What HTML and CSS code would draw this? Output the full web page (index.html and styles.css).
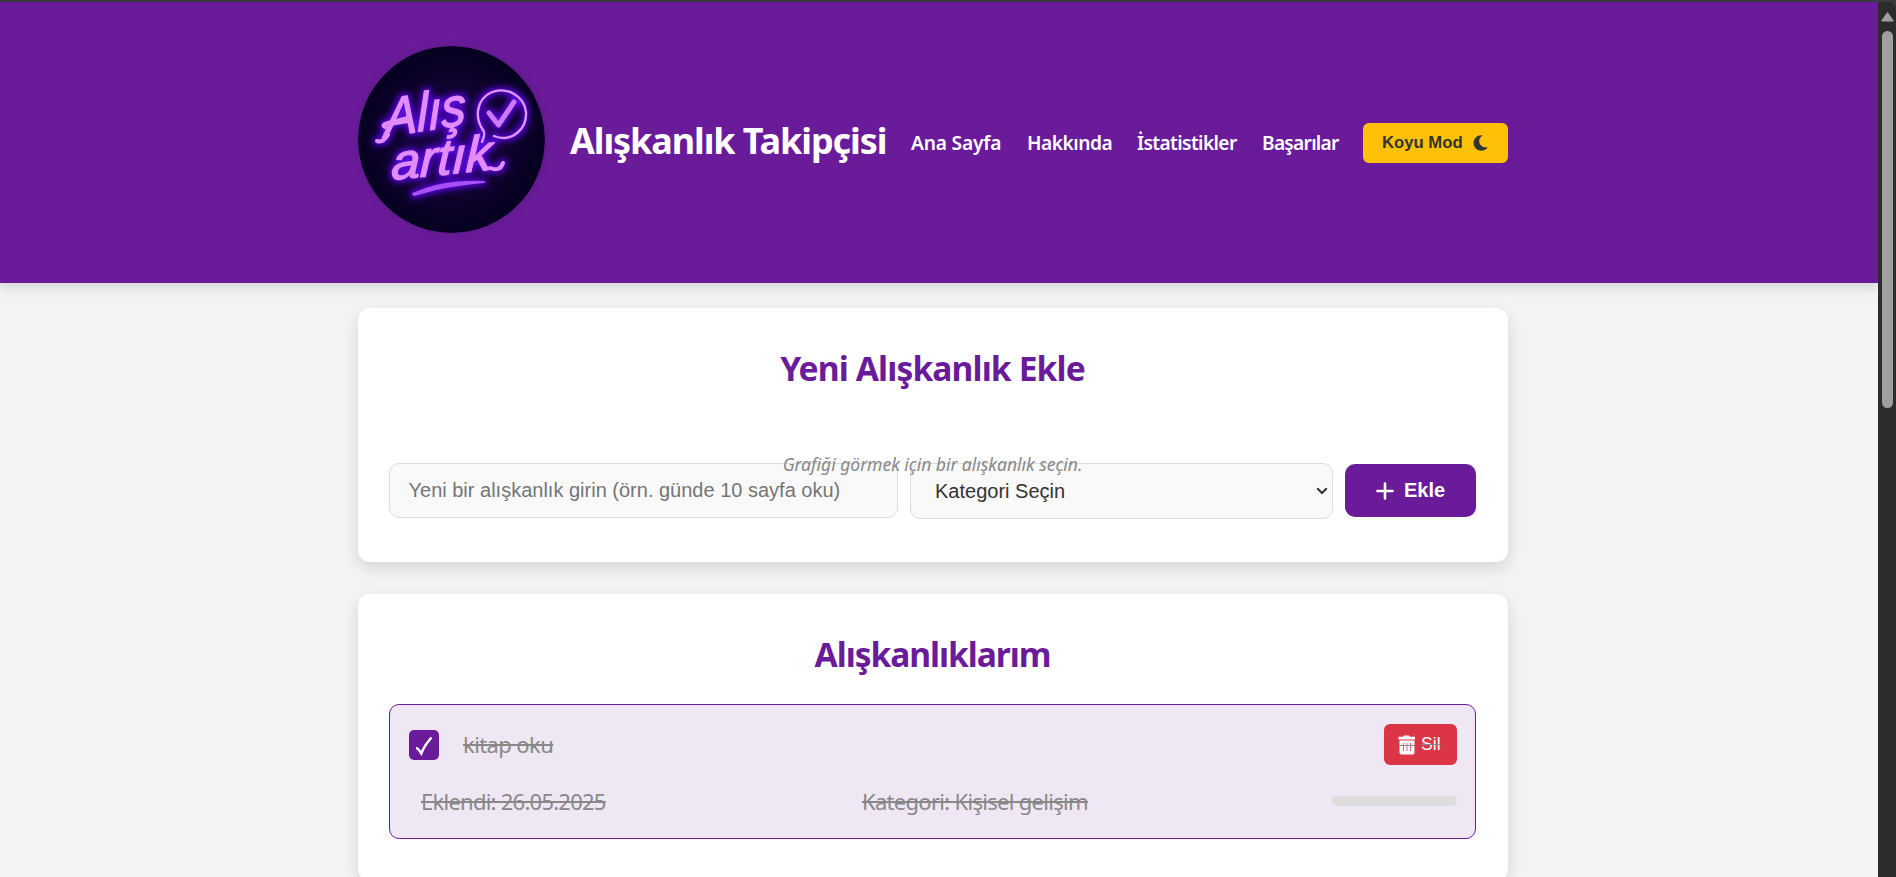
FILE: index.html
```html
<!DOCTYPE html>
<html lang="tr">
<head>
<meta charset="utf-8">
<title>Alışkanlık Takipçisi</title>
<link rel="stylesheet" href="styles.css">
</head>
<body>
<div class="window">
  <div class="page">
    <header class="header">
      <svg class="logo" viewBox="0 0 187 187" role="img" aria-label="Alış artık">
        <defs>
          <radialGradient id="disc" cx="50%" cy="50%" r="50%">
            <stop offset="0" stop-color="#1c0450"/>
            <stop offset=".6" stop-color="#0f022e"/>
            <stop offset="1" stop-color="#060020"/>
          </radialGradient>
          <filter id="glow" x="-20%" y="-20%" width="140%" height="140%">
            <feMorphology in="SourceAlpha" operator="dilate" radius="1.500" result="wide"/>
            <feGaussianBlur in="wide" stdDeviation="3.200" result="soft"/>
            <feFlood flood-color="#5a08e0"/>
            <feComposite in2="soft" operator="in"/>
          </filter>
          <g id="sign">
            <g transform="translate(27 91) rotate(-9) skewX(-8)"><text class="script" x="0" y="0" textLength="82" lengthAdjust="spacingAndGlyphs">Alış</text></g>
            <g transform="translate(33 134) rotate(-6) skewX(-8)"><text class="script script-low" x="0" y="0" textLength="101" lengthAdjust="spacingAndGlyphs">artık</text></g>
            <path class="flourish" d="M27 81 Q23 79 30 77 L50 72 M30 89 Q25 97 19 95"/>
            <path class="flourish" d="M132 122 Q142 126 145 117"/>
            <path class="ring" d="M125 84 C116 71 119 53 133 46.500 C149 40 166 50 168 66 C169 83 154 97 136 90"/>
            <path class="ring" d="M125 84 Q128 87 124 96"/>
            <path class="tick" d="M131 67 L140.500 79 L156 56"/>
            <path class="swoosh" d="M55 148 Q86 134 126 136 Q88 139 56 149 Z"/>
          </g>
        </defs>
        <circle cx="93.500" cy="93.500" r="93.500" fill="url(#disc)"/>
        <g filter="url(#glow)"><use href="#sign"/></g>
        <use href="#sign"/>
      </svg>
      <h1 class="title">Alışkanlık Takipçisi</h1>
      <nav class="nav">
        <a class="link link-home">Ana Sayfa</a>
        <a class="link link-about">Hakkında</a>
        <a class="link link-stats">İstatistikler</a>
        <a class="link link-awards">Başarılar</a>
      </nav>
      <button class="theme"><span>Koyu Mod</span>
        <svg width="15" height="16" viewBox="0 0 15 16"><path fill="#333" d="M8.500 .3C4 .3 .5 3.700 .5 8s3.500 7.700 7.800 7.700c2.400 0 4.500-1 5.900-2.700.3-.4 0-.8-.5-.7C9.700 13 6.200 10 6.200 6.100c0-2.200 1.200-4.200 3-5.300.4-.2.3-.5-.7-.5z"/></svg>
      </button>
    </header>

    <main class="main">
      <section class="card card-add">
        <h2 class="heading heading-add">Yeni Alışkanlık Ekle</h2>
        <p class="hint">Grafiği görmek için bir alışkanlık seçin.</p>
        <div class="form">
          <div class="field field-name"><span class="placeholder">Yeni bir alışkanlık girin (örn. günde 10 sayfa oku)</span></div>
          <div class="field field-category"><span class="choice">Kategori Seçin</span>
            <svg width="12" height="8" viewBox="0 0 12 8"><path d="M1.200 1.200 6 6l4.800-4.800" fill="none" stroke="#333" stroke-width="2"/></svg>
          </div>
          <button class="add">
            <svg width="18" height="18" viewBox="0 0 18 18"><path d="M9 1.500v15M1.500 9h15" stroke="#fff" stroke-width="2.600" stroke-linecap="round"/></svg>
            <span>Ekle</span>
          </button>
        </div>
      </section>

      <section class="card card-list">
        <h2 class="heading heading-list">Alışkanlıklarım</h2>
        <article class="habit">
          <div class="habit-top">
            <span class="check"><svg width="30" height="30" viewBox="0 0 30 30"><path d="M7 18 Q9 18 12.300 23.500 Q15 16 22.500 7.500" fill="none" stroke="#fff" stroke-width="2.400"/></svg></span>
            <span class="name struck">kitap oku</span>
            <button class="delete">
              <svg width="18" height="20" viewBox="0 0 18 20"><path fill="#fff" d="M6 .5h5l1 1.300h5v2.600H.5V1.800H5zM1.500 5.500h15V17.500a2 2 0 0 1-2 2h-11a2 2 0 0 1-2-2z"/><path d="M5.500 8v8M9 8v8M12.500 8v8" stroke="#dc6570"/><path d="M1 10.500h16" stroke="#888"/></svg>
              <span class="delete-text">Sil</span>
            </button>
          </div>
          <div class="habit-bottom">
            <span class="added struck">Eklendi: 26.05.2025</span>
            <span class="category struck">Kategori: Kişisel gelişim</span>
            <span class="progress"></span>
          </div>
        </article>
      </section>
    </main>
  </div>
  <div class="scrollbar">
    <svg width="13" height="10" viewBox="0 0 13 10"><path d="M6.500 1.200 11.800 8.800H1.200z" fill="#9f9f9f" stroke="#9f9f9f" stroke-linejoin="round" stroke-width="1.500"/></svg>
    <div class="thumb"></div>
  </div>
</div>
</body>
</html>
```

FILE: styles.css
```css
* { box-sizing: border-box; }
body { margin: 0; background: #3a3a3a; font-family: "Noto Sans", "Open Sans", sans-serif; color: #333; }
h1, h2, p { margin: 0; }
button { border: 0; padding: 0; font-family: "Liberation Sans", Arial, sans-serif; }
span, a, h1, h2, p { white-space: nowrap; }

.window { display: flex; height: 877px; padding-top: 2px; overflow: hidden; }
.page { width: 1878px; height: 875px; overflow: hidden; background: #f3f3f3; }

.header { display: flex; align-items: flex-start; height: 281px; padding: 44px 0 0 358px; background: #6a1b9a; box-shadow: 0 4px 12px rgba(0, 0, 0, .15); }
.logo { flex: none; width: 187px; height: 187px; border-radius: 50%; box-shadow: 0 0 10px rgba(0, 0, 0, .15); }
.script { font: italic 400 54px "Liberation Sans", Arial, sans-serif; fill: #e58cfb; stroke: #e08cfc; stroke-width: 1.400; stroke-linejoin: round; }
.script-low { font-size: 50px; }
.ring { fill: none; stroke: #df96ff; stroke-width: 2.400; stroke-linecap: round; }
.flourish { fill: none; stroke: #e08cfc; stroke-width: 4; stroke-linecap: round; stroke-linejoin: round; }
.tick { fill: none; stroke: #cc78fa; stroke-width: 5; stroke-linecap: round; stroke-linejoin: round; }
.swoosh { fill: #a850f5; stroke: #a850f5; stroke-width: 2; stroke-linejoin: round; }

.title { width: 317px; margin: 70px 0 0 25px; font-size: 36px; line-height: 50px; font-weight: 700; letter-spacing: -1.100px; color: #fff; }
.nav { display: flex; gap: 25px; margin: 83px 0 0 24px; }
.link { color: #fff; font-size: 19.200px; line-height: 28px; font-weight: 600; }
.link-home { width: 91px; letter-spacing: -.2px; }
.link-about { width: 85px; letter-spacing: -.5px; }
.link-stats { width: 100px; letter-spacing: -.62px; }
.link-awards { width: 76px; letter-spacing: -.75px; }
.theme { display: flex; align-items: center; gap: 10px; width: 145px; height: 40px; margin: 77px 0 0 25px; padding: 0 0 1px 19px; border-radius: 6px; background: #ffc107; color: #333; font-size: 16.700px; font-weight: 700; }

.main { display: flex; flex-direction: column; gap: 32px; width: 1150px; margin: 25px 0 0 358px; }
.card { padding: 0 32px 0 31px; border-radius: 12px; background: #fff; box-shadow: 0 6px 16px rgba(0, 0, 0, .12); }
.card-add { height: 254px; padding-top: 36px; }
.card-list { height: 287px; padding-top: 36px; }
.heading { height: 48px; color: #6a1b9a; font-size: 33.600px; line-height: 48px; font-weight: 700; letter-spacing: -.87px; text-align: center; }
.heading-list { letter-spacing: -1.050px; }
.hint { position: relative; z-index: 1; height: 28px; margin-top: 58px; color: #888; font-size: 17.600px; line-height: 28px; letter-spacing: -.06px; font-style: italic; text-align: center; }
.form { display: flex; align-items: flex-start; gap: 12px; margin-top: -15px; font-family: "Liberation Sans", Arial, sans-serif; font-size: 20px; }
.field { display: flex; align-items: center; border: 1px solid #ddd; border-radius: 10px; background: #f9f9f9; }
.field-name { width: 509px; height: 55px; padding-left: 18.500px; color: #757575; }
.field-category { justify-content: space-between; width: 423px; height: 56px; padding: 0 4px 0 24px; color: #333; }
.add { display: flex; align-items: center; justify-content: center; gap: 10px; width: 131px; height: 53px; margin-top: 1px; border-radius: 10px; background: #6a1b9a; color: #fff; font-size: 20px; font-weight: 700; }

.habit { height: 135px; margin-top: 26px; padding: 19px 18px 0 19px; border: 1px solid #6a1b9a; border-radius: 10px; background: #f0e7f4; }
.habit-top { display: flex; align-items: center; height: 41px; }
.check { width: 30px; height: 30px; border-radius: 5px; background: #6a1b9a; }
.name { margin: 0 auto 2px 24px; letter-spacing: -.6px; }
.struck { color: #888; font-size: 22px; line-height: 30px; text-decoration: line-through; text-decoration-thickness: 2px; }
.delete { display: flex; align-items: center; gap: 5px; width: 73px; height: 41px; padding-left: 14px; border-radius: 6px; background: #dc3545; color: #fff; font-size: 17.600px; }
.delete-text { text-decoration: line-through 1px #888; }
.habit-bottom { display: flex; align-items: center; height: 30px; margin-top: 21px; padding-left: 12px; }
.added { width: 441px; letter-spacing: -.75px; }
.category { width: 228px; letter-spacing: -.7px; }
.progress { width: 125px; height: 10px; margin-left: auto; border-radius: 5px; background: #ddd; }

.scrollbar { display: flex; flex-direction: column; align-items: center; gap: 9px; width: 18px; height: 875px; padding-top: 10px; border-top-right-radius: 8px; background: #2c2c2c; }
.thumb { width: 11px; height: 377px; border-radius: 6px; background: #9f9f9f; }
```
